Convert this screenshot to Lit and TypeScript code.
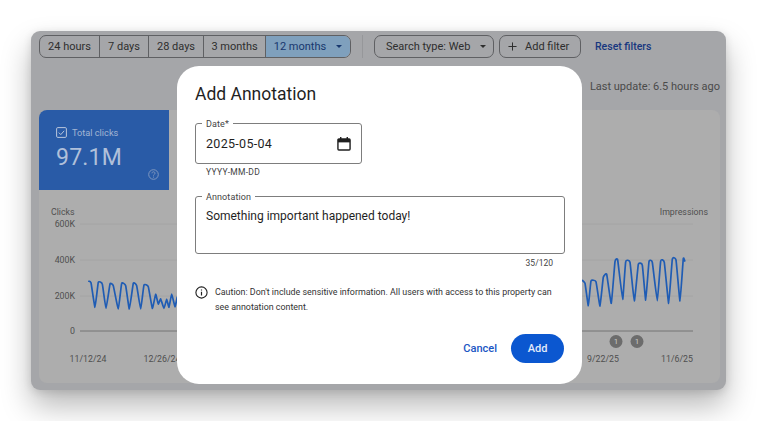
import { LitElement, html, css, svg } from "lit";
import { customElement } from "lit/decorators.js";

const left: [number, number][] = [[205,243],[213,248],[225,322],[235,247],[247,252],[258,325],[270,252],[280,257],[295,327],[305,250],[317,257],[328,327],[340,250],[350,257],[362,327],[372,255],[385,260],[397,325],[407,283],[415,312],[422,297],[432,325],[440,298],[447,322],[455,282],[465,320],[472,290]];
const right: [number, number][] = [[36,270],[45,280],[55,347],[63,273],[78,275],[90,348],[100,262],[110,253],[124,340],[135,215],[143,210],[158,328],[167,215],[180,217],[193,333],[205,223],[217,225],[227,330],[237,215],[247,217],[262,332],[272,213],[283,217],[296,340],[307,208],[318,210],[330,333],[340,206],[345,215]];

function smooth(pts: [number, number][], ox: number, oy: number): string {
  const p = pts.map(([x, y]) => [ox + x / 3, oy + y / 3]);
  let d = `M${p[0][0].toFixed(1)} ${p[0][1].toFixed(1)}`;
  const k = 0.06;
  for (let i = 0; i < p.length - 1; i++) {
    const a = p[Math.max(i - 1, 0)], b = p[i], c = p[i + 1], e = p[Math.min(i + 2, p.length - 1)];
    const c1x = b[0] + (c[0] - a[0]) * k, c1y = b[1] + (c[1] - a[1]) * k;
    const c2x = c[0] - (e[0] - b[0]) * k, c2y = c[1] - (e[1] - b[1]) * k;
    d += `C${c1x.toFixed(1)} ${c1y.toFixed(1)} ${c2x.toFixed(1)} ${c2y.toFixed(1)} ${c[0].toFixed(1)} ${c[1].toFixed(1)}`;
  }
  return d;
}
const lp = smooth(left, 20, 200);
const rp = smooth(right, 570, 190);

const ticks: [string, number][] = [["600K", 224], ["400K", 260], ["200K", 296], ["0", 331]];

@customElement("app-root")
export class AppRoot extends LitElement {
  static styles = css`
    :host { display: block; position: relative; width: 757px; height: 421px; padding: 31px 31px 0; box-sizing: border-box; background: #fff; overflow: hidden; font-family: Roboto, "Liberation Sans", sans-serif; color: #2e2e2e; }
    .win { width: 695px; height: 359px; box-sizing: border-box; background: #a5a6a9; border-radius: 9px; padding: 4px 6px 7px 8px; display: flex; flex-direction: column; box-shadow: 0 16px 30px rgba(0,0,0,.28), 0 2px 8px rgba(0,0,0,.12); }
    .bar { display: flex; align-items: center; height: 23px; }
    .seg { display: flex; height: 23px; box-sizing: border-box; border: 1px solid #5f6063; border-radius: 7px; overflow: hidden; font-size: 11px; }
    .seg div { display: flex; align-items: center; justify-content: center; box-sizing: border-box; border-right: 1px solid #5f6063; }
    .seg div:last-child { border-right: 0; background: #7fa0bd; color: #17376e; gap: 10px; }
    .caret { width: 0; height: 0; border-left: 3px solid transparent; border-right: 3px solid transparent; border-top: 3px solid currentColor; }
    .sep { width: 1px; height: 23px; background: #96979a; margin: 0 11px; }
    .btn { height: 23px; box-sizing: border-box; border: 1px solid #5f6063; border-radius: 7px; display: flex; align-items: center; font-size: 11px; }
    .b1 { width: 120px; padding-left: 11px; gap: 10px; margin-right: 5px; }
    .b2 { width: 81.5px; padding-left: 8px; gap: 8px; margin-right: 14.5px; }
    .reset { color: #17377f; font-size: 10.5px; font-weight: 500; }
    .upd { height: 52px; padding-top: 5px; box-sizing: border-box; display: flex; align-items: center; justify-content: flex-end; font-size: 11px; color: #4a4a4a; }
    .panel { flex: 1; background: #adadad; border-radius: 8px; overflow: hidden; display: flex; flex-direction: column; }
    .tile { width: 130px; height: 80px; box-sizing: border-box; background: #295ba7; color: #b0c0da; padding: 16px 0 0 17px; position: relative; }
    .tl { display: flex; align-items: center; gap: 5px; font-size: 9.2px; color: #a3b5d3; height: 13px; }
    .val { font-size: 23px; line-height: 30px; margin-top: 4px; letter-spacing: .2px; }
    .q { position: absolute; right: 10px; bottom: 10px; }
    .chart { display: block; width: 681px; height: 193px; }
    .chart text { font-family: Roboto, "Liberation Sans", sans-serif; font-size: 8.8px; fill: #4f4f4f; }
    .chart .bt { fill: #c9c9c9; font-size: 8px; }
    .dlg { position: absolute; left: 177px; top: 66px; width: 405px; height: 318px; box-sizing: border-box; background: #fff; border-radius: 22px; padding: 17px 18px 0 18px; color: #1f1f1f; display: flex; flex-direction: column; }
    h2 { margin: 0; font-size: 17.5px; font-weight: 400; line-height: 22px; }
    .field { position: relative; box-sizing: border-box; border: 1px solid #7d7d7d; border-radius: 3px; padding-left: 10px; font-size: 12.5px; letter-spacing: .3px; }
    .lab { position: absolute; left: 6px; top: -5px; background: #fff; padding: 0 4px; font-size: 9px; line-height: 11px; color: #444; letter-spacing: .1px; }
    .date { width: 167px; height: 41px; margin-top: 17.5px; display: flex; align-items: center; justify-content: space-between; padding-right: 10px; }
    .help { font-size: 8.5px; line-height: 11px; color: #444; margin: 3.5px 0 0 11px; letter-spacing: .3px; }
    .ann { width: 370px; height: 58px; margin-top: 18px; padding-top: 12px; font-size: 12px; line-height: 15px; letter-spacing: 0; }
    .count { font-size: 8.5px; line-height: 11px; color: #444; text-align: right; margin: 4px 11px 0 0; }
    .cau { display: flex; gap: 7px; margin-top: 16px; font-size: 8.9px; line-height: 15px; color: #333; white-space: nowrap; }
    .cau svg { flex: none; margin-top: 1px; }
    .acts { display: flex; justify-content: flex-end; align-items: center; gap: 14px; margin-top: 19px; font-size: 11px; font-weight: 500; }
    .cancel { color: #1a56c4; }
    .add { width: 53px; height: 29px; border-radius: 15px; background: #0b57d0; color: #e3ebfa; display: flex; align-items: center; justify-content: center; }
  `;

  render() {
    const segs: [string, number][] = [["24 hours", 60], ["7 days", 49], ["28 days", 55], ["3 months", 62]];
    return html`
      <div class="win">
        <div class="bar">
          <div class="seg">
            ${segs.map(([t, w]) => html`<div style="width:${w}px">${t}</div>`)}
            <div style="width:84px">12 months <span class="caret"></span></div>
          </div>
          <div class="sep"></div>
          <div class="btn b1">Search type: Web <span class="caret"></span></div>
          <div class="btn b2">
            <svg width="9" height="9" viewBox="0 0 10 10"><path d="M5 .5v9M.5 5h9" stroke="#2e2e2e" stroke-width="1.1" fill="none"/></svg>
            Add filter
          </div>
          <div class="reset">Reset filters</div>
        </div>
        <div class="upd">Last update: 6.5 hours ago</div>
        <div class="panel">
          <div class="tile">
            <div class="tl">
              <svg width="11" height="11" viewBox="0 0 11 11"><rect x=".6" y=".6" width="9.8" height="9.8" rx="1.2" fill="none" stroke="#b9c6dc"/><path d="M2.8 5.6l2 2 3.4-3.8" fill="none" stroke="#b9c6dc"/></svg>
              Total clicks
            </div>
            <div class="val">97.1M</div>
            <svg class="q" width="11" height="11" viewBox="0 0 11 11"><circle cx="5.5" cy="5.5" r="4.8" fill="none" stroke="#7f97bf"/><path d="M4 4.3c0-2 3-2 3 0 0 1.1-1.5 1-1.5 2.3M5.5 7.6v1" fill="none" stroke="#7f97bf"/></svg>
          </div>
          <svg class="chart" viewBox="39 190 681 193">
            <text x="51" y="215">Clicks</text>
            <text x="708" y="215" text-anchor="end">Impressions</text>
            ${ticks.map(([t, y]) => svg`
              <text x="75" y="${y + 3}" text-anchor="end">${t}</text>
              <line x1="80" x2="693" y1="${y}" y2="${y}" stroke="${t === "0" ? "#747474" : "#a4a4a4"}" stroke-width="1"/>
            `)}
            <path d="${lp}" fill="none" stroke="#1f5cb4" stroke-width="1.7" stroke-linejoin="round"/>
            <path d="${rp}" fill="none" stroke="#1f5cb4" stroke-width="1.7" stroke-linejoin="round"/>
            <circle cx="616" cy="341.500" r="6.500" fill="#6c6c6c"/>
            <circle cx="637" cy="341.500" r="6.500" fill="#6c6c6c"/>
            <text class="bt" x="616" y="344.300" text-anchor="middle">1</text>
            <text class="bt" x="637" y="344.300" text-anchor="middle">1</text>
            <text x="88" y="362" text-anchor="middle">11/12/24</text>
            <text x="162" y="362" text-anchor="middle">12/26/24</text>
            <text x="603" y="362" text-anchor="middle">9/22/25</text>
            <text x="677" y="362" text-anchor="middle">11/6/25</text>
          </svg>
        </div>
      </div>
      <div class="dlg">
        <h2>Add Annotation</h2>
        <div class="field date">
          <span class="lab">Date*</span>
          <span>2025-05-04</span>
          <svg width="14" height="15" viewBox="0 0 15 16"><path d="M1 4.200a1 1 0 0 1 1-1h11a1 1 0 0 1 1 1V14a1 1 0 0 1-1 1H2a1 1 0 0 1-1-1z" fill="none" stroke="#1f1f1f" stroke-width="1.500"/><path d="M1 3.200h13v3.600H1z" fill="#1f1f1f"/><path d="M4 1v3M11 1v3" stroke="#1f1f1f" stroke-width="1.500"/></svg>
        </div>
        <div class="help">YYYY-MM-DD</div>
        <div class="field ann">
          <span class="lab">Annotation</span>
          Something important happened today!
        </div>
        <div class="count">35/120</div>
        <div class="cau">
          <svg width="13" height="13" viewBox="0 0 13 13"><circle cx="6.500" cy="6.500" r="5.600" fill="none" stroke="#1f1f1f" stroke-width="1.100"/><path d="M6.500 5.800v3.600M6.500 3.400v1.200" stroke="#1f1f1f" stroke-width="1.200"/></svg>
          <span>Caution: Don't include sensitive information. All users with access to this property can<br>see annotation content.</span>
        </div>
        <div class="acts">
          <span class="cancel">Cancel</span>
          <span class="add">Add</span>
        </div>
      </div>
    `;
  }
}
